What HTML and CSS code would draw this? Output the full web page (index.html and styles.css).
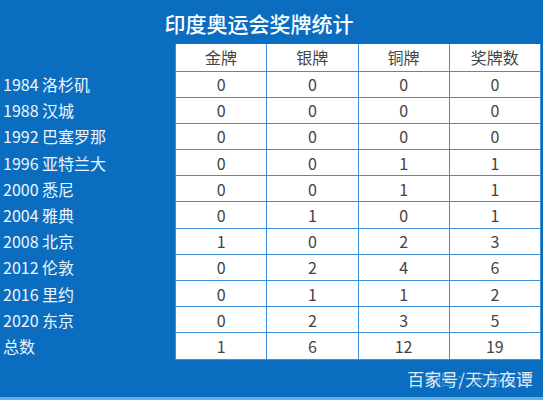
FILE: index.html
```html
<!DOCTYPE html>
<html lang="zh-CN">
<head>
<meta charset="utf-8">
<title>印度奥运会奖牌统计</title>
<link rel="stylesheet" href="styles.css">
</head>
<body>
<div class="page">
  <h1 class="title">印度奥运会奖牌统计</h1>
  <table class="medals">
    <thead>
      <tr class="head-row"><th class="label"></th><th>金牌</th><th>银牌</th><th>铜牌</th><th>奖牌数</th></tr>
    </thead>
    <tbody>
      <tr><th class="label">1984 洛杉矶</th><td>0</td><td>0</td><td>0</td><td>0</td></tr>
      <tr><th class="label">1988 汉城</th><td>0</td><td>0</td><td>0</td><td>0</td></tr>
      <tr><th class="label">1992 巴塞罗那</th><td>0</td><td>0</td><td>0</td><td>0</td></tr>
      <tr><th class="label">1996 亚特兰大</th><td>0</td><td>0</td><td>1</td><td>1</td></tr>
      <tr><th class="label">2000 悉尼</th><td>0</td><td>0</td><td>1</td><td>1</td></tr>
      <tr><th class="label">2004 雅典</th><td>0</td><td>1</td><td>0</td><td>1</td></tr>
      <tr><th class="label">2008 北京</th><td>1</td><td>0</td><td>2</td><td>3</td></tr>
      <tr><th class="label">2012 伦敦</th><td>0</td><td>2</td><td>4</td><td>6</td></tr>
      <tr><th class="label">2016 里约</th><td>0</td><td>1</td><td>1</td><td>2</td></tr>
      <tr><th class="label">2020 东京</th><td>0</td><td>2</td><td>3</td><td>5</td></tr>
      <tr><th class="label">总数</th><td>1</td><td>6</td><td>12</td><td>19</td></tr>
    </tbody>
  </table>
  <div class="footer">
    <span class="mark">百家号/天方夜谭</span>
    <span class="mark-ghost">制图：天南南谭</span>
  </div>
  <div class="strip"></div>
</div>
</body>
</html>
```
FILE: styles.css
```css
html, body {
  margin: 0;
  padding: 0;
}
body {
  background: #0b6dbf;
  font-family: "Noto Sans CJK SC", "Noto Sans", sans-serif;
}
.page {
  width: 543px;
  height: 400px;
  display: flex;
  flex-direction: column;
  background: #0b6dbf;
  overflow: hidden;
}
.title {
  margin: 0;
  height: 44px;
  line-height: 46px;
  font-size: 21px;
  font-weight: 500;
  color: #ffffff;
  text-align: center;
  padding-right: 25px;
}
.medals {
  border-collapse: collapse;
  table-layout: fixed;
  width: 541px;
  font-size: 16px;
}
.medals th, .medals td {
  padding: 0;
  font-weight: 400;
  text-align: center;
  color: #444444;
  background: #ffffff;
  border: 1px solid #3e8fd4;
  line-height: 20px;
}
.medals .label {
  width: 172px;
  background: transparent;
  border: none;
  border-right: 1px solid #3e8fd4;
  text-align: left;
  padding-left: 3px;
  color: #eef4fb;
  white-space: nowrap;
}
.medals thead .label {
  border-right: none;
}
.head-row {
  height: 27px;
}
.medals tbody tr {
  height: 26.2px;
}
.medals thead th:not(.label) {
  border-top: none;
}
.footer {
  position: relative;
  flex: 1;
  display: flex;
  justify-content: flex-end;
  align-items: center;
  padding-right: 10px;
}
.mark {
  font-size: 17px;
  color: rgba(255, 255, 255, 0.85);
}
.mark-ghost {
  position: absolute;
  right: 12px;
  top: 8px;
  font-size: 15px;
  color: rgba(255, 255, 255, 0.3);
}
.strip {
  height: 3px;
  background: #5fb0e4;
}
```
